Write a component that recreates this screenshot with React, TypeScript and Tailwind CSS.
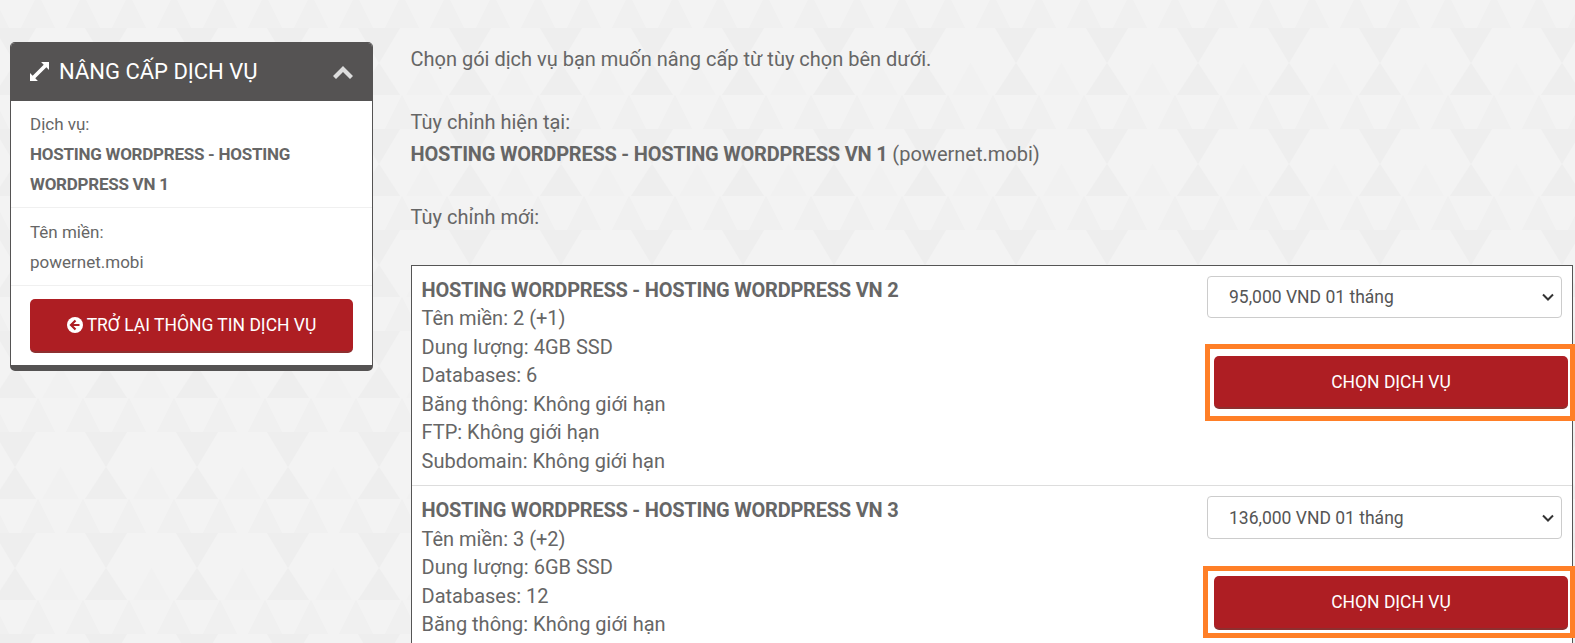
import React from "react";

const font = { fontFamily: "Roboto, sans-serif" };

function Pattern() {
  const up = (x: number, y: number, hw: number, h: number) => `${x},${y} ${x + hw},${y + h} ${x - hw},${y + h}`;
  const down = (x: number, y: number, hw: number, h: number) => `${x - hw},${y} ${x + hw},${y} ${x},${y + h}`;
  return (
    <svg className="absolute inset-0 h-full w-full" aria-hidden="true">
      <defs>
        <pattern id="tri" width="91" height="101" patternUnits="userSpaceOnUse" x="15" y="63">
          <rect x="0" y="0" width="91" height="101" fill="#f3f3f3" />
          <polygon points={up(0, 0, 21, 32)} fill="#eeeeee" />
          <polygon points={up(91, 0, 21, 32)} fill="#eeeeee" />
          <polygon points={up(45.500, 0, 18, 32)} fill="#f1f1f1" />
          <polygon points={up(23, 32, 17, 34)} fill="#f0f0f0" />
          <polygon points={up(68, 32, 17, 34)} fill="#f0f0f0" />
          <polygon points={down(0, 66, 21, 35)} fill="#eeeeee" />
          <polygon points={down(91, 66, 21, 35)} fill="#eeeeee" />
        </pattern>
      </defs>
      <rect width="100%" height="100%" fill="url(#tri)" />
    </svg>
  );
}

function Plan({ name, spec, price, boxClass, tail }: { name: string; spec: string[]; price: string; boxClass: string; tail?: boolean }) {
  return (
    <div className={`flex bg-white ${tail ? "" : "border-b border-[#dddddd]"}`}>
      <div className={`flex-1 pl-[10px] text-[20px] leading-[28.5px] ${tail ? "pt-[10px] pb-[9px]" : "pt-[9.7px] pb-[10.300px]"}`}>
        <div className="font-bold tracking-[-0.22px]">{name}</div>
        {spec.map((s) => (
          <div key={s}>{s}</div>
        ))}
      </div>
      <div className="w-[368px] shrink-0 relative pt-[10px]">
        <div className={`ml-[3px] flex w-[355px] items-center justify-between rounded-[4px] border border-[#cccccc] bg-white pl-[21px] pr-[7px] text-[17.5px] text-[#555555] ${tail ? "h-[43px]" : "h-[42px]"}`}>
          <span>{price}</span>
          <svg width="12" height="8" viewBox="0 0 12 8" fill="none" stroke="#333" strokeWidth="2">
            <path d="M1 1.500l5 5 5-5" />
          </svg>
        </div>
        <button className={`ml-[10px] block w-[354px] rounded-[5px] border-b-2 border-[#8e2f2f] bg-[#ae1e23] text-[17.5px] text-white ${tail ? "mt-[37px] h-[54px]" : "mt-[38px] h-[53px]"}`}>
          CHỌN DỊCH VỤ
        </button>
        <div className={`pointer-events-none absolute border-[5px] border-[#ff7f27] ${boxClass}`} />
      </div>
    </div>
  );
}

export default function App() {
  return (
    <div className="relative h-[643px] w-[1575px] overflow-hidden bg-[#f3f3f3] text-[#666666]" style={font}>
      <Pattern />
      <div className="relative flex items-start pt-[42px] pl-[10px]">
        <aside className="w-[363px] shrink-0 overflow-hidden rounded-[5px] border border-[#555353] border-b-[6px] bg-white">
          <div className="flex h-[58px] items-center justify-between bg-[#555353] pl-[19px] pr-[19px] text-white">
            <div className="flex items-center gap-[10px] pb-[2px] text-[22px]">
              <svg width="19" height="19" viewBox="0 0 18 18" fill="white">
                <path d="M10.500 0H18V7.500L15.500 5 5 15.500 7.500 18H0V10.500L2.500 13 13 2.500Z" />
              </svg>
              <span>NÂNG CẤP DỊCH VỤ</span>
            </div>
            <svg width="20" height="13" viewBox="0 0 20 13" fill="#dddddd">
              <path d="M10 0l10 10-3 3-7-7-7 7-3-3z" />
            </svg>
          </div>
          <div className="border-b border-[#f0f0f0] px-[19px] pt-[8px] pb-[8px] text-[17px] leading-[30px]">
            <div>Dịch vụ:</div>
            <div className="font-bold tracking-[-0.25px]">HOSTING WORDPRESS - HOSTING WORDPRESS VN 1</div>
          </div>
          <div className="border-b border-[#f0f0f0] px-[19px] pt-[9px] pb-[8px] text-[17px] leading-[30px]">
            <div>Tên miền:</div>
            <div>powernet.mobi</div>
          </div>
          <div className="px-[19px] pt-[13px] pb-[12px]">
            <button className="flex h-[54px] w-full items-center justify-center gap-[4px] rounded-[5px] border-b-2 border-[#8e2f2f] bg-[#ae1e23] text-[17.5px] text-white">
              <svg width="16" height="16" viewBox="0 0 16 16">
                <circle cx="8" cy="8" r="8" fill="white" />
                <path d="M8.500 3.500L4 8l4.500 4.500M4.500 8H12.500" fill="none" stroke="#ae1e23" strokeWidth="2.200" />
              </svg>
              <span>TRỞ LẠI THÔNG TIN DỊCH VỤ</span>
            </button>
          </div>
        </aside>
        <main className="ml-[37.5px] flex-1 text-[20px] leading-[32px]">
          <p className="mt-[1px]">Chọn gói dịch vụ bạn muốn nâng cấp từ tùy chọn bên dưới.</p>
          <p className="mt-[31px]">Tùy chỉnh hiện tại:</p>
          <p>
            <span className="font-bold tracking-[-0.22px]">HOSTING WORDPRESS - HOSTING WORDPRESS VN 1</span> (powernet.mobi)
          </p>
          <p className="mt-[31px]">Tùy chỉnh mới:</p>
          <div className="mt-[32px] w-[1162.5px] border border-[#555555] border-b-0">
            <Plan
              name="HOSTING WORDPRESS - HOSTING WORDPRESS VN 2"
              spec={["Tên miền: 2 (+1)", "Dung lượng: 4GB SSD", "Databases: 6", "Băng thông: Không giới hạn", "FTP: Không giới hạn", "Subdomain: Không giới hạn"]}
              price="95,000 VND 01 tháng"
              boxClass="left-[1px] top-[78px] h-[77px] w-[370px]"
            />
            <Plan
              tail
              name="HOSTING WORDPRESS - HOSTING WORDPRESS VN 3"
              spec={["Tên miền: 3 (+2)", "Dung lượng: 6GB SSD", "Databases: 12", "Băng thông: Không giới hạn", "FTP: Không giới hạn", "Subdomain: Không giới hạn"]}
              price="136,000 VND 01 tháng"
              boxClass="-left-[1px] top-[80px] h-[72px] w-[372px]"
            />
          </div>
        </main>
      </div>
    </div>
  );
}
